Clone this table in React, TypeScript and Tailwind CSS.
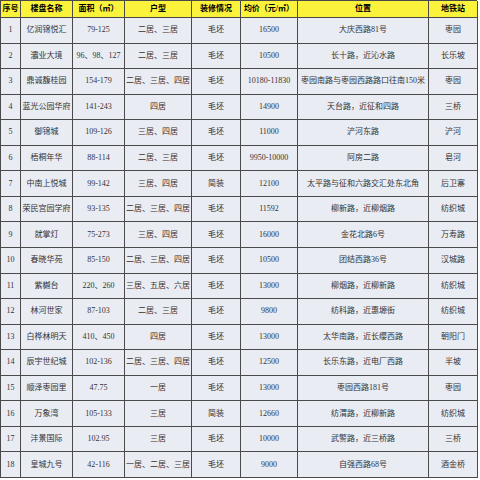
const rows: string[][] = [
  ["1", "亿润锦悦汇", "79-125", "二居、三居", "毛坯", "16500", "大庆西路81号", "枣园"],
  ["2", "灞业大境", "96、98、127", "二居、三居", "毛坯", "10500", "长十路，近沁水路", "长乐坡"],
  ["3", "鼎诚馥桂园", "154-179", "二居、三居、四居", "毛坯", "10180-11830", "枣园南路与枣园西路路口往南150米", "枣园"],
  ["4", "蓝光公园华府", "141-243", "四居", "毛坯", "14900", "天台路，近征和四路", "三桥"],
  ["5", "御锦城", "109-126", "三居、四居", "毛坯", "11000", "浐河东路", "浐河"],
  ["6", "梧桐年华", "88-114", "二居、三居", "毛坯", "9950-10000", "阿房二路", "皂河"],
  ["7", "中南上悦城", "99-142", "三居、四居", "简装", "12100", "太平路与征和六路交汇处东北角", "后卫寨"],
  ["8", "荣民宫园学府", "93-135", "二居、三居、四居", "毛坯", "11592", "柳新路，近柳烟路", "纺织城"],
  ["9", "就掌灯", "75-273", "三居、四居", "毛坯", "16000", "金花北路6号", "万寿路"],
  ["10", "春晓华苑", "85-150", "二居、三居、四居", "毛坯", "10500", "团结西路36号", "汉城路"],
  ["11", "紫樾台", "220、260", "三居、五居、六居", "毛坯", "13000", "柳烟路，近柳新路", "纺织城"],
  ["12", "林河世家", "87-103", "二居、三居", "毛坯", "9800", "纺科路，近惠塬街", "纺织城"],
  ["13", "白桦林明天", "410、450", "四居", "毛坯", "13000", "太华南路，近长缨西路", "朝阳门"],
  ["14", "辰宇世纪城", "102-136", "二居、三居、四居", "毛坯", "12500", "长乐东路，近电厂西路", "半坡"],
  ["15", "顺泽枣园里", "47.75", "一居", "毛坯", "13000", "枣园西路181号", "枣园"],
  ["16", "万象湾", "105-133", "三居", "简装", "12660", "纺渭路，近柳新路", "纺织城"],
  ["17", "沣景国际", "102.95", "三居", "毛坯", "10000", "武警路，近三桥路", "三桥"],
  ["18", "皇城九号", "42-116", "一居、二居、三居", "毛坯", "9000", "自强西路68号", "酒金桥"],
];

const headers = ["序号", "楼盘名称", "面积（㎡）", "户型", "装修情况", "均价（元/㎡）", "位置", "地铁站"];

export default function App() {
  return (
    <div className="w-[480px] h-[480px] bg-white overflow-hidden">
      <div
        className="grid grid-cols-[20px_52px_52px_67px_49px_57px_131px_49px] grid-rows-[17px_repeat(18,1fr)] w-[477px] h-[478px] border-l border-t border-[#4a4a4a] text-[8px] leading-none"
        style={{ fontFamily: '"Liberation Serif", "Noto Sans CJK SC", serif' }}
      >
        {headers.map((h) => (
          <div
            key={h}
            className="flex items-center justify-center whitespace-nowrap bg-[#fbf23b] border-r border-b border-[#4a4a4a] font-bold text-black"
          >
            {h}
          </div>
        ))}
        {rows.map((r) =>
          r.map((c, i) => (
            <div
              key={r[0] + "-" + i}
              className="flex items-center justify-center whitespace-nowrap bg-[#eaecf3] border-r border-b border-[#4a4a4a] text-[#333]"
            >
              {c}
            </div>
          ))
        )}
      </div>
    </div>
  );
}
